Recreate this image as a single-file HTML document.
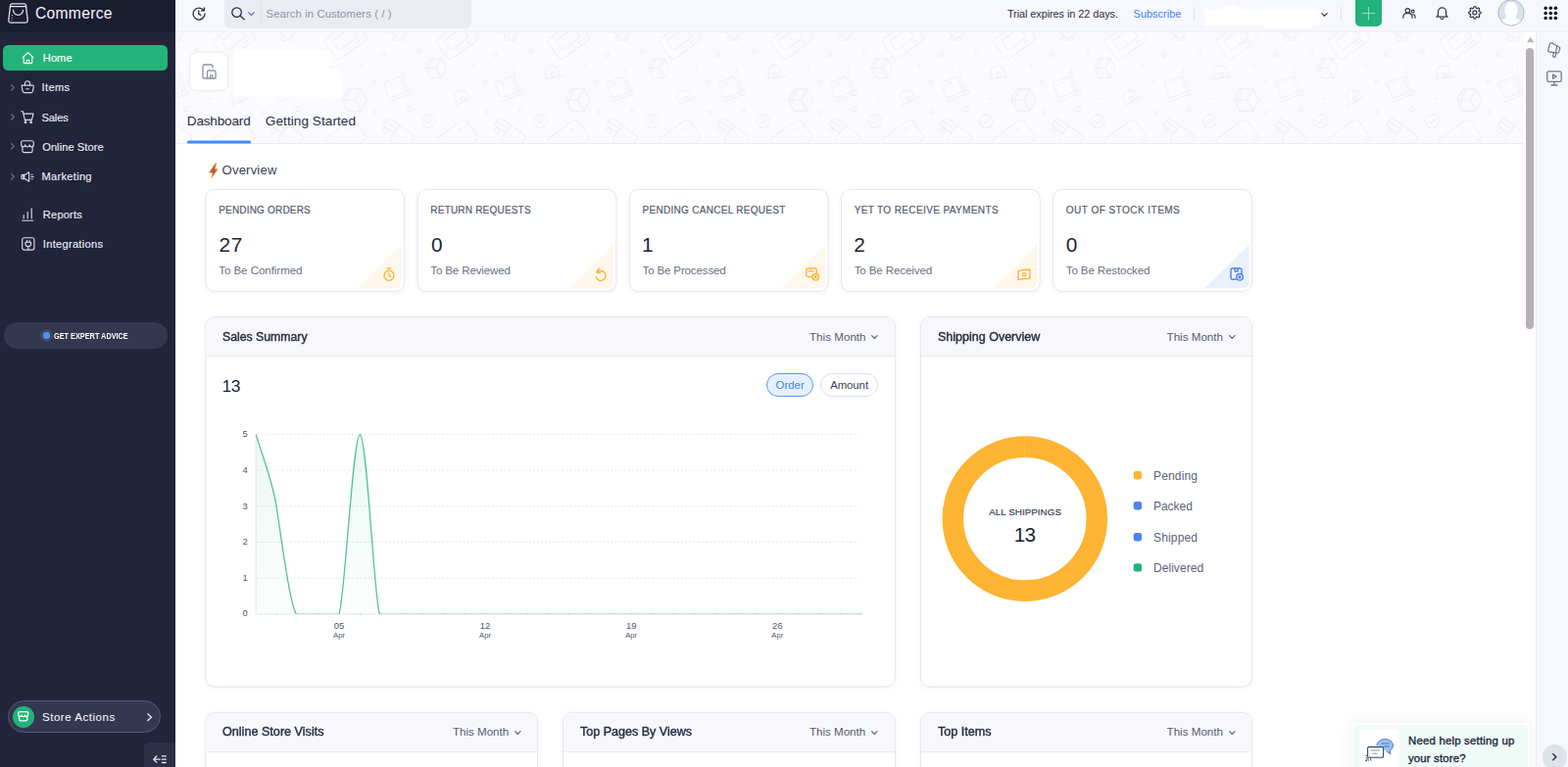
<!DOCTYPE html>
<html lang="en"><head><meta charset="utf-8"><title>Commerce - Dashboard</title>
<style>
html,body{margin:0;padding:0;}
body{width:1600px;height:783px;overflow:hidden;position:relative;background:#fff;font-family:"Liberation Sans", sans-serif;}
div,svg,span{position:absolute;box-sizing:border-box;}
.t{white-space:nowrap;line-height:1;}
svg{overflow:visible;}

</style></head><body>
<div style="left:179px;top:33px;width:1388px;height:114px;background:#fbfbff;border-bottom:1px solid #ebecf4;overflow:hidden;"><svg style="left:0;top:0" width="1389" height="114" viewBox="0 0 1389 114" fill="none" stroke="#f0f0fa" stroke-width="1.2" stroke-linecap="round" stroke-linejoin="round"><defs><pattern id="pt" width="227.5" height="140" patternUnits="userSpaceOnUse" x="153.5" y="-3"><g transform="translate(0,0)"><g transform="translate(20.3,10.5) rotate(-36)"><rect x="-19" y="-12.5" width="38" height="25" rx="4"/><rect x="-12" y="-7" width="23" height="12" rx="2"/><path d="M6 8.6h5"/></g><circle cx="71" cy="9" r="2.6"/><circle cx="78" cy="10" r="1.8"/><path d="M66 3l5 3M82 4l-4 4"/><circle cx="58.8" cy="25.6" r="2.2"/><circle cx="95.2" cy="22.1" r="2"/><circle cx="48.7" cy="53" r="2"/><circle cx="85.1" cy="81.5" r="2.3"/><circle cx="50.2" cy="84.4" r="2"/><path d="M33.5 35.2a3.6 3.6 0 0 1 4 5"/><path d="M107.4 71.6a1.8 1.8 0 0 1 3.4 0"/><g transform="translate(70.5,58.5)"><g transform="rotate(-21)"><rect x="-9.5" y="-8" width="18" height="17" rx="2.5"/><path d="M-4 -4.6h5"/><path d="M-11 12.4h22"/></g><path d="M8.6 -19.4c-2 3-1.6 5-.6 8l5.6 15"/><circle cx="14.6" cy="6.2" r="2.4"/></g><g transform="translate(112.2,39.9)"><path d="M-5.6 -10h11.2l5.4 9.6-5.4 10h-11.2l-5.4-10z"/><path d="M-11 -0.4h11.6l5-9.6M0.6 -0.4l5 10M-3 -10l-4.6 9.6v3.4"/></g><g transform="translate(29.4,72.3) scale(1.16)"><path d="M-5.6 -10h11.2l5.4 9.6-5.4 10h-11.2l-5.4-10z"/><path d="M-11 -0.4h11.6l5-9.6M0.6 -0.4l5 10M-3 -10l-4.6 9.6v3.4"/></g><circle cx="105.2" cy="93.7" r="6.8"/><path d="M102.4 94l2 2.2 3.8-4.6"/><g transform="translate(20,112) rotate(-36)"><rect x="-19" y="-12.5" width="38" height="25" rx="4"/><path d="M6 -6h5"/><circle cx="-19" cy="4" r="2"/><circle cx="-12" cy="10" r="2"/></g><g transform="translate(69.5,106) rotate(36)"><rect x="-14" y="-10" width="14" height="10" rx="2"/><rect x="0" y="-10" width="20" height="19" rx="3"/><path d="M-14 -5h14M-14 0h14"/><circle cx="-9" cy="3" r="2.4"/></g></g><g transform="translate(113.75,0)"><g transform="translate(20.3,10.5) rotate(-36)"><rect x="-19" y="-12.5" width="38" height="25" rx="4"/><rect x="-12" y="-7" width="23" height="12" rx="2"/><path d="M6 8.6h5"/></g><circle cx="71" cy="9" r="2.6"/><circle cx="78" cy="10" r="1.8"/><path d="M66 3l5 3M82 4l-4 4"/><circle cx="58.8" cy="25.6" r="2.2"/><circle cx="95.2" cy="22.1" r="2"/><circle cx="48.7" cy="53" r="2"/><circle cx="85.1" cy="81.5" r="2.3"/><circle cx="50.2" cy="84.4" r="2"/><path d="M33.5 35.2a3.6 3.6 0 0 1 4 5"/><path d="M107.4 71.6a1.8 1.8 0 0 1 3.4 0"/><g transform="translate(70.5,58.5)"><g transform="rotate(-21)"><rect x="-9.5" y="-8" width="18" height="17" rx="2.5"/><path d="M-4 -4.6h5"/><path d="M-11 12.4h22"/></g><path d="M8.6 -19.4c-2 3-1.6 5-.6 8l5.6 15"/><circle cx="14.6" cy="6.2" r="2.4"/></g><g transform="translate(117,43)"><g transform="rotate(-8)"><path d="M-7 6v-8.4l2.2-2.4 3.6-1.8 4.4 1.6 2.8 2.6.6 8.4"/><circle cx="0.4" cy="3.4" r="2.2"/><path d="M-11 6.4h22"/></g></g><g transform="translate(24.4,68)"><g transform="rotate(-27)"><path d="M-7 6v-8.4l2.2-2.4 3.6-1.8 4.4 1.6 2.8 2.6.6 8.4"/><circle cx="0.4" cy="3.4" r="2.2"/><path d="M-11 6.4h22"/></g></g><circle cx="105.2" cy="93.7" r="6.8"/><path d="M102.4 94l2 2.2 3.8-4.6"/><g transform="translate(20,112) rotate(-36)"><rect x="-19" y="-12.5" width="38" height="25" rx="4"/><path d="M6 -6h5"/><circle cx="-19" cy="4" r="2"/><circle cx="-12" cy="10" r="2"/></g><g transform="translate(69.5,106) rotate(36)"><rect x="-14" y="-10" width="14" height="10" rx="2"/><rect x="0" y="-10" width="20" height="19" rx="3"/><path d="M-14 -5h14M-14 0h14"/><circle cx="-9" cy="3" r="2.4"/></g></g><g transform="translate(-113.75,0)"><g transform="translate(20.3,10.5) rotate(-36)"><rect x="-19" y="-12.5" width="38" height="25" rx="4"/><rect x="-12" y="-7" width="23" height="12" rx="2"/><path d="M6 8.6h5"/></g><circle cx="71" cy="9" r="2.6"/><circle cx="78" cy="10" r="1.8"/><path d="M66 3l5 3M82 4l-4 4"/><circle cx="58.8" cy="25.6" r="2.2"/><circle cx="95.2" cy="22.1" r="2"/><circle cx="48.7" cy="53" r="2"/><circle cx="85.1" cy="81.5" r="2.3"/><circle cx="50.2" cy="84.4" r="2"/><path d="M33.5 35.2a3.6 3.6 0 0 1 4 5"/><path d="M107.4 71.6a1.8 1.8 0 0 1 3.4 0"/><g transform="translate(70.5,58.5)"><g transform="rotate(-21)"><rect x="-9.5" y="-8" width="18" height="17" rx="2.5"/><path d="M-4 -4.6h5"/><path d="M-11 12.4h22"/></g><path d="M8.6 -19.4c-2 3-1.6 5-.6 8l5.6 15"/><circle cx="14.6" cy="6.2" r="2.4"/></g><g transform="translate(117,43)"><g transform="rotate(-8)"><path d="M-7 6v-8.4l2.2-2.4 3.6-1.8 4.4 1.6 2.8 2.6.6 8.4"/><circle cx="0.4" cy="3.4" r="2.2"/><path d="M-11 6.4h22"/></g></g><g transform="translate(24.4,68)"><g transform="rotate(-27)"><path d="M-7 6v-8.4l2.2-2.4 3.6-1.8 4.4 1.6 2.8 2.6.6 8.4"/><circle cx="0.4" cy="3.4" r="2.2"/><path d="M-11 6.4h22"/></g></g><circle cx="105.2" cy="93.7" r="6.8"/><path d="M102.4 94l2 2.2 3.8-4.6"/><g transform="translate(20,112) rotate(-36)"><rect x="-19" y="-12.5" width="38" height="25" rx="4"/><path d="M6 -6h5"/><circle cx="-19" cy="4" r="2"/><circle cx="-12" cy="10" r="2"/></g><g transform="translate(69.5,106) rotate(36)"><rect x="-14" y="-10" width="14" height="10" rx="2"/><rect x="0" y="-10" width="20" height="19" rx="3"/><path d="M-14 -5h14M-14 0h14"/><circle cx="-9" cy="3" r="2.4"/></g></g><g transform="translate(227.5,0)"><g transform="translate(20.3,10.5) rotate(-36)"><rect x="-19" y="-12.5" width="38" height="25" rx="4"/><rect x="-12" y="-7" width="23" height="12" rx="2"/><path d="M6 8.6h5"/></g><circle cx="71" cy="9" r="2.6"/><circle cx="78" cy="10" r="1.8"/><path d="M66 3l5 3M82 4l-4 4"/><circle cx="58.8" cy="25.6" r="2.2"/><circle cx="95.2" cy="22.1" r="2"/><circle cx="48.7" cy="53" r="2"/><circle cx="85.1" cy="81.5" r="2.3"/><circle cx="50.2" cy="84.4" r="2"/><path d="M33.5 35.2a3.6 3.6 0 0 1 4 5"/><path d="M107.4 71.6a1.8 1.8 0 0 1 3.4 0"/><g transform="translate(70.5,58.5)"><g transform="rotate(-21)"><rect x="-9.5" y="-8" width="18" height="17" rx="2.5"/><path d="M-4 -4.6h5"/><path d="M-11 12.4h22"/></g><path d="M8.6 -19.4c-2 3-1.6 5-.6 8l5.6 15"/><circle cx="14.6" cy="6.2" r="2.4"/></g><g transform="translate(112.2,39.9)"><path d="M-5.6 -10h11.2l5.4 9.6-5.4 10h-11.2l-5.4-10z"/><path d="M-11 -0.4h11.6l5-9.6M0.6 -0.4l5 10M-3 -10l-4.6 9.6v3.4"/></g><g transform="translate(29.4,72.3) scale(1.16)"><path d="M-5.6 -10h11.2l5.4 9.6-5.4 10h-11.2l-5.4-10z"/><path d="M-11 -0.4h11.6l5-9.6M0.6 -0.4l5 10M-3 -10l-4.6 9.6v3.4"/></g><circle cx="105.2" cy="93.7" r="6.8"/><path d="M102.4 94l2 2.2 3.8-4.6"/><g transform="translate(20,112) rotate(-36)"><rect x="-19" y="-12.5" width="38" height="25" rx="4"/><path d="M6 -6h5"/><circle cx="-19" cy="4" r="2"/><circle cx="-12" cy="10" r="2"/></g><g transform="translate(69.5,106) rotate(36)"><rect x="-14" y="-10" width="14" height="10" rx="2"/><rect x="0" y="-10" width="20" height="19" rx="3"/><path d="M-14 -5h14M-14 0h14"/><circle cx="-9" cy="3" r="2.4"/></g></g></pattern></defs><rect x="0" y="0" width="1389" height="114" fill="url(#pt)" stroke="none"/></svg></div>
<div style="left:1555px;top:33px;width:12px;height:750px;background:#fff;"></div>
<div style="left:193px;top:53px;width:40px;height:40px;background:#fff;border:1px solid #eeeef5;border-radius:8px;box-shadow:0 0 3px rgba(60,60,110,.05);"></div>
<svg style="left:205.5px;top:65px" width="15" height="16" viewBox="0 0 15 16" fill="none" stroke="#8d92a8" stroke-width="1.3" stroke-linecap="round" stroke-linejoin="round" ><path d="M11 4V2.6A1.6 1.6 0 0 0 9.4 1H2.6A1.6 1.6 0 0 0 1 2.6v10.8A1.6 1.6 0 0 0 2.6 15H5"/><path d="M5.5 15V8.6A1.6 1.6 0 0 1 7.1 7h5.3A1.6 1.6 0 0 1 14 8.6V15H5.5z"/><path d="M8.6 15v-2.2a1.2 1.2 0 0 1 2.4 0V15"/></svg>
<div style="left:238px;top:51px;width:98px;height:48px;background:#fff;border-radius:4px;filter:blur(1.2px);"></div>
<div style="left:300px;top:70px;width:48px;height:31px;background:#fff;border-radius:4px;filter:blur(1.2px);"></div>
<span class="t" style="left:190.80px;top:117.49px;font-size:13.6px;color:#2b2e44;letter-spacing:-0.200px;">Dashboard</span>
<span class="t" style="left:270.80px;top:117.49px;font-size:13.6px;color:#2b2e44;letter-spacing:0.057px;">Getting Started</span>
<svg style="left:0;top:0" width="1600" height="783"><path d="M191 146.5v-1.4a1.5 1.5 0 0 1 1.5-1.5h62a1.5 1.5 0 0 1 1.5 1.5v1.4z" fill="#408dfb"/></svg>
<svg style="left:0;top:0" width="1600" height="200"><path d="M220.1 166.2L213.3 176.1l3.6.3-1.1 5.500 6.500-9.300-2.900-.2 1.300-6.200z" fill="#a5623f" stroke="#f3b24a" stroke-width="0.7" stroke-linejoin="round"/></svg>
<span class="t" style="left:226.60px;top:167.31px;font-size:13.1px;color:#3a3f55;letter-spacing:0.171px;">Overview</span>
<svg style="left:0;top:0;filter:drop-shadow(0 1px 2px rgba(60,60,110,.07))" width="1600" height="783" viewBox="0 0 1600 783"><rect x="209.9" y="193.4" width="202.7" height="104" rx="9.5" fill="#fff" stroke="#e6e7f1"/><path d="M409.9 249.9V287.9a6 6 0 0 1-6 6H364.9Z" fill="#fff7eb"/><rect x="426.1" y="193.4" width="202.7" height="104" rx="9.5" fill="#fff" stroke="#e6e7f1"/><path d="M626.1 249.9V287.9a6 6 0 0 1-6 6H581.1Z" fill="#fff7eb"/><rect x="642.3" y="193.4" width="202.7" height="104" rx="9.5" fill="#fff" stroke="#e6e7f1"/><path d="M842.3 249.9V287.9a6 6 0 0 1-6 6H797.3Z" fill="#fff7eb"/><rect x="858.5" y="193.4" width="202.7" height="104" rx="9.5" fill="#fff" stroke="#e6e7f1"/><path d="M1058.5 249.9V287.9a6 6 0 0 1-6 6H1013.5Z" fill="#fff7eb"/><rect x="1074.7" y="193.4" width="202.7" height="104" rx="9.5" fill="#fff" stroke="#e6e7f1"/><path d="M1274.7 249.9V287.9a6 6 0 0 1-6 6H1229.7Z" fill="#eaf0fb"/><rect x="209.9" y="323.5" width="703.5" height="377.5" rx="9.5" fill="#fff" stroke="#e6e7f1"/><path d="M210.4 363.7V333.0a9.0 9.0 0 0 1 9.0 -9.0H903.9a9.0 9.0 0 0 1 9.0 9.0V363.7Z" fill="#f8f8fc"/><path d="M210.4 363.7H912.9" stroke="#e9eaf2" fill="none"/><rect x="939.5" y="323.5" width="338" height="377.5" rx="9.5" fill="#fff" stroke="#e6e7f1"/><path d="M940.0 363.7V333.0a9.0 9.0 0 0 1 9.0 -9.0H1268.0a9.0 9.0 0 0 1 9.0 9.0V363.7Z" fill="#f8f8fc"/><path d="M940.0 363.7H1277.0" stroke="#e9eaf2" fill="none"/><rect x="210" y="727.4" width="338.5" height="80" rx="9.5" fill="#fff" stroke="#e6e7f1"/><path d="M210.5 767.6V736.9a9.0 9.0 0 0 1 9.0 -9.0H539.0a9.0 9.0 0 0 1 9.0 9.0V767.6Z" fill="#f8f8fc"/><path d="M210.5 767.6H548.0" stroke="#e9eaf2" fill="none"/><rect x="574.5" y="727.4" width="339" height="80" rx="9.5" fill="#fff" stroke="#e6e7f1"/><path d="M575.0 767.6V736.9a9.0 9.0 0 0 1 9.0 -9.0H904.0a9.0 9.0 0 0 1 9.0 9.0V767.6Z" fill="#f8f8fc"/><path d="M575.0 767.6H913.0" stroke="#e9eaf2" fill="none"/><rect x="939.5" y="727.4" width="338" height="80" rx="9.5" fill="#fff" stroke="#e6e7f1"/><path d="M940.0 767.6V736.9a9.0 9.0 0 0 1 9.0 -9.0H1268.0a9.0 9.0 0 0 1 9.0 9.0V767.6Z" fill="#f8f8fc"/><path d="M940.0 767.6H1277.0" stroke="#e9eaf2" fill="none"/></svg>
<span class="t lab" style="left:223.20px;top:209.53px;font-size:10px;color:#565b70;letter-spacing:0.185px;-webkit-text-stroke:0.2px #565b70;">PENDING ORDERS</span>
<span class="t" style="left:223.40px;top:239.79px;font-size:20.8px;color:#1d1f35;letter-spacing:0.800px;">27</span>
<span class="t" style="left:223.20px;top:270.18px;font-size:11.6px;color:#6b7086;letter-spacing:-0.071px;">To Be Confirmed</span>
<svg style="left:391.2px;top:273px" width="12" height="14" viewBox="0 0 12 14" fill="none" stroke="#fbb33c" stroke-width="1.4" stroke-linecap="round" stroke-linejoin="round" ><circle cx="6" cy="8.2" r="5"/><path d="M4.3 1h3.4M6 5.6v2.8l1.6 1.2"/></svg>
<span class="t lab" style="left:439.35px;top:209.53px;font-size:10px;color:#565b70;letter-spacing:0.200px;-webkit-text-stroke:0.2px #565b70;">RETURN REQUESTS</span>
<span class="t" style="left:439.95px;top:239.79px;font-size:20.8px;color:#1d1f35;">0</span>
<span class="t" style="left:439.35px;top:270.18px;font-size:11.6px;color:#6b7086;letter-spacing:-0.169px;">To Be Reviewed</span>
<svg style="left:607.4px;top:273px" width="12" height="14" viewBox="0 0 12 14" fill="none" stroke="#fbb33c" stroke-width="1.4" stroke-linecap="round" stroke-linejoin="round" ><path d="M2.2 5.2a5 5 0 1 1-1 4.6"/><path d="M4.6 1L1.6 4.6l4 1.2"/></svg>
<span class="t lab" style="left:655.50px;top:209.53px;font-size:10px;color:#565b70;letter-spacing:0.295px;-webkit-text-stroke:0.2px #565b70;">PENDING CANCEL REQUEST</span>
<span class="t" style="left:655.10px;top:239.79px;font-size:20.8px;color:#1d1f35;">1</span>
<span class="t" style="left:655.50px;top:270.18px;font-size:11.6px;color:#6b7086;letter-spacing:-0.171px;">To Be Processed</span>
<svg style="left:822.2px;top:273.2px" width="14" height="13.6" viewBox="0 0 14 13.6" fill="none" stroke="#fbb33c" stroke-width="1.4" stroke-linecap="round" stroke-linejoin="round" ><rect x="0.8" y="1" width="10.4" height="8.6" rx="1.6"/><path d="M3 4.2c1.6-1 3.2-1 4.8 0"/><circle cx="10.2" cy="9.8" r="3.3" fill="#fff7eb"/><path d="M9.2 8.8l2 2M11.2 8.8l-2 2"/></svg>
<span class="t lab" style="left:871.65px;top:209.53px;font-size:10px;color:#565b70;letter-spacing:0.382px;-webkit-text-stroke:0.2px #565b70;">YET TO RECEIVE PAYMENTS</span>
<span class="t" style="left:871.25px;top:239.79px;font-size:20.8px;color:#1d1f35;">2</span>
<span class="t" style="left:871.65px;top:270.18px;font-size:11.6px;color:#6b7086;letter-spacing:-0.123px;">To Be Received</span>
<svg style="left:1038.4px;top:274px" width="14" height="12.4" viewBox="0 0 14 12.4" fill="none" stroke="#fbb33c" stroke-width="1.4" stroke-linecap="round" stroke-linejoin="round" ><path d="M1 2.6c4-1 8-1.4 12-1.4v9c-4 0-8 .4-12 1.4z"/><circle cx="7" cy="6.2" r="1.6"/></svg>
<span class="t lab" style="left:1087.80px;top:209.53px;font-size:10px;color:#565b70;letter-spacing:0.471px;-webkit-text-stroke:0.2px #565b70;">OUT OF STOCK ITEMS</span>
<span class="t" style="left:1087.80px;top:239.79px;font-size:20.8px;color:#1d1f35;">0</span>
<span class="t" style="left:1087.80px;top:270.18px;font-size:11.6px;color:#6b7086;letter-spacing:-0.143px;">To Be Restocked</span>
<svg style="left:1254.6px;top:273.2px" width="14" height="13.6" viewBox="0 0 14 13.6" fill="none" stroke="#4a84e4" stroke-width="1.4" stroke-linecap="round" stroke-linejoin="round" ><path d="M6 12.2H2.4A1.4 1.4 0 0 1 1 10.8V2.4A1.4 1.4 0 0 1 2.4 1h8.2A1.4 1.4 0 0 1 12 2.4V6"/><path d="M5 1v3h3V1"/><circle cx="10" cy="9.8" r="3.3"/><circle cx="10" cy="9.8" r="0.9"/></svg>
<span class="t" style="left:227.10px;top:336.71px;font-size:13.1px;color:#2b2e44;transform:scaleX(0.9366);transform-origin:0 0;-webkit-text-stroke:0.45px #2b2e44;">Sales Summary</span>
<span class="t" style="left:826.00px;top:338.18px;font-size:11.6px;color:#565b70;letter-spacing:0.022px;">This Month</span>
<svg style="left:889.2px;top:342.4px" width="6.6" height="4.2" viewBox="0 0 6.6 4.2" fill="none" stroke="#6b7086" stroke-width="1.3" stroke-linecap="round" stroke-linejoin="round" ><path d="M0.6 0.6l2.7 2.9 2.7-2.9"/></svg>
<svg style="left:0;top:0" width="1600" height="783" viewBox="0 0 1600 783">
<defs><linearGradient id="ga" x1="0" y1="0" x2="0" y2="1"><stop offset="0" stop-color="#23b37a" stop-opacity=".09"/><stop offset="1" stop-color="#23b37a" stop-opacity="0.015"/></linearGradient></defs>
<g stroke="#dcdfea" stroke-width="1" stroke-dasharray="1.4 2.8" fill="none"><line x1="262.7" x2="876.5" y1="590.0" y2="590.0"/><line x1="262.7" x2="876.5" y1="553.4" y2="553.4"/><line x1="262.7" x2="876.5" y1="516.8" y2="516.8"/><line x1="262.7" x2="876.5" y1="480.2" y2="480.2"/><line x1="262.7" x2="876.5" y1="443.6" y2="443.6"/></g>
<path d="M261.2 443.6 C267.2 463.7 278.1 491.2 282.1 516.8 C288.1 557.1 295.8 615.6 302.2 626.6 L261.2 626.6 Z M346.0 626.6 C351.4 615.6 360.2 443.6 367.3 443.6 C374.3 443.6 382.0 615.6 387.4 626.6 Z" fill="url(#ga)"/>
<line x1="261.2" x2="261.2" y1="443.6" y2="626.6" stroke="#e3e5f1" stroke-width="1"/>
<line x1="261.2" x2="879" y1="626.9" y2="626.9" stroke="#e1e6f0" stroke-width="1"/>
<path d="M302.2 626.6 L346.0 626.6 M387.4 626.6 L878.9 626.6" fill="none" stroke="#b9e2d2" stroke-width="1"/>
<g stroke="#8fd4b7" stroke-width=".8"><line x1="282.5" x2="282.5" y1="625.7" y2="627.2"/><line x1="303.8" x2="303.8" y1="625.7" y2="627.2"/><line x1="325.1" x2="325.1" y1="625.7" y2="627.2"/><line x1="346.4" x2="346.4" y1="625.7" y2="627.2"/><line x1="367.7" x2="367.7" y1="625.7" y2="627.2"/><line x1="389.0" x2="389.0" y1="625.7" y2="627.2"/><line x1="410.3" x2="410.3" y1="625.7" y2="627.2"/><line x1="431.6" x2="431.6" y1="625.7" y2="627.2"/><line x1="452.9" x2="452.9" y1="625.7" y2="627.2"/><line x1="474.2" x2="474.2" y1="625.7" y2="627.2"/><line x1="495.5" x2="495.5" y1="625.7" y2="627.2"/><line x1="516.8" x2="516.8" y1="625.7" y2="627.2"/><line x1="538.1" x2="538.1" y1="625.7" y2="627.2"/><line x1="559.4" x2="559.4" y1="625.7" y2="627.2"/><line x1="580.7" x2="580.7" y1="625.7" y2="627.2"/><line x1="602.0" x2="602.0" y1="625.7" y2="627.2"/><line x1="623.3" x2="623.3" y1="625.7" y2="627.2"/><line x1="644.6" x2="644.6" y1="625.7" y2="627.2"/><line x1="665.9" x2="665.9" y1="625.7" y2="627.2"/><line x1="687.2" x2="687.2" y1="625.7" y2="627.2"/><line x1="708.5" x2="708.5" y1="625.7" y2="627.2"/><line x1="729.8" x2="729.8" y1="625.7" y2="627.2"/><line x1="751.1" x2="751.1" y1="625.7" y2="627.2"/><line x1="772.4" x2="772.4" y1="625.7" y2="627.2"/><line x1="793.7" x2="793.7" y1="625.7" y2="627.2"/><line x1="815.0" x2="815.0" y1="625.7" y2="627.2"/><line x1="836.3" x2="836.3" y1="625.7" y2="627.2"/><line x1="857.6" x2="857.6" y1="625.7" y2="627.2"/><line x1="878.9" x2="878.9" y1="625.7" y2="627.2"/></g>
<path d="M261.2 443.6 C267.2 463.7 278.1 491.2 282.1 516.8 C288.1 557.1 295.8 615.6 302.2 626.6 M346.0 626.6 C351.4 615.6 360.2 443.6 367.3 443.6 C374.3 443.6 382.0 615.6 387.4 626.6" fill="none" stroke="#56c295" stroke-width="1.3" stroke-linejoin="round" stroke-linecap="butt"/>
<g font-family='"Liberation Sans", sans-serif' font-size="9.3" fill="#51566c"><text x="250" y="629.3" text-anchor="middle">0</text><text x="250" y="592.7" text-anchor="middle">1</text><text x="250" y="556.1" text-anchor="middle">2</text><text x="250" y="519.5" text-anchor="middle">3</text><text x="250" y="482.9" text-anchor="middle">4</text><text x="250" y="446.3" text-anchor="middle">5</text><text x="346.0" y="641.6" text-anchor="middle" font-size="9.5">05</text><text x="346.0" y="651.2" text-anchor="middle" font-size="7.7">Apr</text><text x="495.1" y="641.6" text-anchor="middle" font-size="9.5">12</text><text x="495.1" y="651.2" text-anchor="middle" font-size="7.7">Apr</text><text x="644.2" y="641.6" text-anchor="middle" font-size="9.5">19</text><text x="644.2" y="651.2" text-anchor="middle" font-size="7.7">Apr</text><text x="793.3" y="641.6" text-anchor="middle" font-size="9.5">26</text><text x="793.3" y="651.2" text-anchor="middle" font-size="7.7">Apr</text></g>
</svg>
<span class="t" style="left:226.40px;top:386.27px;font-size:17.4px;color:#1d1f35;letter-spacing:-0.200px;">13</span>
<div style="left:782px;top:381px;width:48px;height:24px;background:#e6f0fc;border:1px solid #5b9af3;border-radius:12px;"></div>
<span class="t" style="left:791.60px;top:387.95px;font-size:11.4px;color:#3f83e6;">Order</span>
<div style="left:837px;top:381px;width:59px;height:24px;background:#fff;border:1px solid #dcdfec;border-radius:12px;"></div>
<span class="t" style="left:847.20px;top:387.95px;font-size:11.4px;color:#3a3f55;letter-spacing:-0.080px;">Amount</span>
<span class="t" style="left:956.70px;top:336.71px;font-size:13.1px;color:#2b2e44;transform:scaleX(0.9555);transform-origin:0 0;-webkit-text-stroke:0.45px #2b2e44;">Shipping Overview</span>
<span class="t" style="left:1190.60px;top:338.18px;font-size:11.6px;color:#565b70;">This Month</span>
<svg style="left:1253.6px;top:342.4px" width="6.6" height="4.2" viewBox="0 0 6.6 4.2" fill="none" stroke="#6b7086" stroke-width="1.3" stroke-linecap="round" stroke-linejoin="round" ><path d="M0.6 0.6l2.7 2.9 2.7-2.9"/></svg>
<svg style="left:0;top:0" width="1600" height="783" viewBox="0 0 1600 783"><circle cx="1045.8" cy="529.6" r="73.5" fill="none" stroke="#fdb432" stroke-width="21.6"/><line x1="1045.8" x2="1045.8" y1="445.4" y2="467" stroke="#fdc666" stroke-width=".6"/></svg>
<span class="t" style="left:1009.20px;top:517.70px;font-size:9.8px;color:#3a3f55;letter-spacing:0.050px;-webkit-text-stroke:0.2px #3a3f55;">ALL SHIPPINGS</span>
<span class="t" style="left:1034.80px;top:535.96px;font-size:20.6px;color:#1d1f35;letter-spacing:-0.800px;">13</span>
<svg style="left:0;top:0" width="1600" height="783"><rect x="1156.7" y="481.1" width="8.4" height="8.4" rx="2.4" fill="#fdb432"/></svg>
<span class="t" style="left:1177.00px;top:480.44px;font-size:12px;color:#5d6277;letter-spacing:0.167px;">Pending</span>
<svg style="left:0;top:0" width="1600" height="783"><rect x="1156.7" y="512.1" width="8.4" height="8.4" rx="2.4" fill="#4b86ee"/></svg>
<span class="t" style="left:1177.00px;top:511.44px;font-size:12px;color:#5d6277;letter-spacing:-0.040px;">Packed</span>
<svg style="left:0;top:0" width="1600" height="783"><rect x="1156.7" y="544.1" width="8.4" height="8.4" rx="2.4" fill="#4b86ee"/></svg>
<span class="t" style="left:1177.00px;top:542.64px;font-size:12px;color:#5d6277;letter-spacing:0.167px;">Shipped</span>
<svg style="left:0;top:0" width="1600" height="783"><rect x="1156.7" y="575.2" width="8.4" height="8.4" rx="2.4" fill="#23b37a"/></svg>
<span class="t" style="left:1177.00px;top:573.64px;font-size:12px;color:#5d6277;letter-spacing:0.050px;">Delivered</span>
<span class="t" style="left:227.20px;top:739.81px;font-size:13.1px;color:#2b2e44;transform:scaleX(0.9630);transform-origin:0 0;-webkit-text-stroke:0.45px #2b2e44;">Online Store Visits</span>
<span class="t" style="left:462.00px;top:741.28px;font-size:11.6px;color:#565b70;letter-spacing:-0.022px;">This Month</span>
<svg style="left:524.8px;top:745.5px" width="6.6" height="4.2" viewBox="0 0 6.6 4.2" fill="none" stroke="#6b7086" stroke-width="1.3" stroke-linecap="round" stroke-linejoin="round" ><path d="M0.6 0.6l2.7 2.9 2.7-2.9"/></svg>
<span class="t" style="left:591.70px;top:739.81px;font-size:13.1px;color:#2b2e44;transform:scaleX(0.9571);transform-origin:0 0;-webkit-text-stroke:0.45px #2b2e44;">Top Pages By Views</span>
<span class="t" style="left:826.00px;top:741.28px;font-size:11.6px;color:#565b70;letter-spacing:-0.022px;">This Month</span>
<svg style="left:889.4px;top:745.5px" width="6.6" height="4.2" viewBox="0 0 6.6 4.2" fill="none" stroke="#6b7086" stroke-width="1.3" stroke-linecap="round" stroke-linejoin="round" ><path d="M0.6 0.6l2.7 2.9 2.7-2.9"/></svg>
<span class="t" style="left:956.70px;top:739.81px;font-size:13.1px;color:#2b2e44;transform:scaleX(0.9632);transform-origin:0 0;-webkit-text-stroke:0.45px #2b2e44;">Top Items</span>
<span class="t" style="left:1190.60px;top:741.28px;font-size:11.6px;color:#565b70;">This Month</span>
<svg style="left:1253.6px;top:745.5px" width="6.6" height="4.2" viewBox="0 0 6.6 4.2" fill="none" stroke="#6b7086" stroke-width="1.3" stroke-linecap="round" stroke-linejoin="round" ><path d="M0.6 0.6l2.7 2.9 2.7-2.9"/></svg>
<div style="left:1380.2px;top:738px;width:181px;height:60px;background:#fff;border-radius:6px;box-shadow:0 0 16px rgba(60,60,110,.09);"></div>
<div style="left:1382.2px;top:739.8px;width:177px;height:60px;background:#effbf6;border-radius:5px;"></div>
<div style="left:1386.7px;top:744.3px;width:41.5px;height:50px;background:#fff;border-radius:5px;"></div>
<svg style="left:1393px;top:753px" width="29" height="25" viewBox="0 0 29 25" fill="none" stroke="none" stroke-width="1" stroke-linecap="round" stroke-linejoin="round" ><path d="M12 8c0-3.600 3.600-6.400 8.200-6.400S28.400 4.400 28.400 8c0 2.200-1.300 4.100-3.300 5.200l.9 3.600-3.800-2.500" fill="#9cc4f2" stroke="#4a78b8" stroke-width="1"/><path d="M17 6h7.500M19.500 9h5" stroke="#4a78b8" stroke-width="1"/><path d="M1 20.600a2.600 2.600 0 0 1 2.600 2.600M1 18.200a5 5 0 0 1 5 5" stroke="#3c4660" stroke-width="1"/><rect x="2.600" y="9.600" width="16" height="10.600" rx="1" fill="#fff" stroke="#3c4660" stroke-width="1.100"/><path d="M6 13h9M8 16.200h4" stroke="#8a90a6" stroke-width="1"/><circle cx="1.200" cy="23.300" r="1" fill="#3c4660" stroke="none"/></svg>
<span class="t" style="left:1437.00px;top:750.85px;font-size:11.4px;color:#21243b;letter-spacing:0.200px;-webkit-text-stroke:0.35px #21243b;">Need help setting up</span>
<span class="t" style="left:1437.00px;top:768.65px;font-size:11.4px;color:#21243b;letter-spacing:0.160px;-webkit-text-stroke:0.35px #21243b;">your store?</span>
<svg style="left:1557.6px;top:38.4px" width="7.4" height="5.2" viewBox="0 0 7.4 5.2" fill="#b7b0b8" stroke="none" stroke-width="1.5" stroke-linecap="round" stroke-linejoin="round" ><path d="M3.7 0L7.4 5.2H0z"/></svg>
<div style="left:1557.4px;top:48.8px;width:7.6px;height:287.6px;background:#b7b0b8;border-radius:4px;"></div>
<div style="left:1567px;top:33px;width:33px;height:750px;background:#f7f7fe;border-left:1px solid #ececf5;"></div>
<svg style="left:1579px;top:43px" width="14" height="16" viewBox="0 0 14 16" fill="none" stroke="#73788f" stroke-width="1.2" stroke-linecap="round" stroke-linejoin="round" ><path d="M4.7 0.9L12.3 5.3a1 1 0 0 1 .45 1.1L11.6 10.3a1 1 0 0 1-1.1.75L1.5 9.9a1 1 0 0 1-.85-1.2L2.5 1.7a1.5 1.5 0 0 1 2.2-.8z"/><path d="M9.6 4.2L8.4 10.8"/><path d="M6.3 10.9l-.6 2.9a1.3 1.3 0 0 0 2.6.5l.6-3"/></svg>
<svg style="left:1578px;top:72px" width="16" height="16" viewBox="0 0 16 16" fill="none" stroke="#73788f" stroke-width="1.3" stroke-linecap="round" stroke-linejoin="round" ><rect x="0.8" y="0.8" width="14.4" height="10.6" rx="1.6"/><path d="M6.6 4l3.4 2.1-3.4 2.1z"/><path d="M8 11.4v3.2M5 15h6"/></svg>
<div style="left:1573.6px;top:760.2px;width:25.6px;height:25.6px;background:#dde3eb;border-radius:50%;"></div>
<svg style="left:1584.4px;top:769.2px" width="4.6" height="7.6" viewBox="0 0 4.6 7.6" fill="none" stroke="#2b2e44" stroke-width="1.5" stroke-linecap="round" stroke-linejoin="round" ><path d="M0.8 0.8l3 3-3 3"/></svg>
<div style="left:179px;top:0px;width:1421px;height:33px;background:#f7f7fe;border-bottom:1px solid #f0f0f8;"></div>
<svg style="left:196px;top:7px" width="14" height="14" viewBox="0 0 14 14" fill="none" stroke="#2b2e44" stroke-width="1.3" stroke-linecap="round" stroke-linejoin="round" ><path d="M11.9 3.6A6 6 0 1 0 13 7"/><path d="M12.4 0.8v3h-3"/><path d="M6.8 4v3.4l2 1"/></svg>
<div style="left:229.4px;top:-6px;width:251.8px;height:34.6px;background:#ebecf3;border-radius:6px;"></div>
<svg style="left:236px;top:7px" width="14" height="13.5" viewBox="0 0 14 13.5" fill="none" stroke="#2b2e44" stroke-width="1.3" stroke-linecap="round" stroke-linejoin="round" ><circle cx="5.6" cy="5.6" r="4.8"/><path d="M9.2 9.2l4 3.6"/></svg>
<svg style="left:252.6px;top:11.6px" width="7" height="4.2" viewBox="0 0 7 4.2" fill="none" stroke="#3f83e6" stroke-width="1.2" stroke-linecap="round" stroke-linejoin="round" ><path d="M0.6 0.6l2.9 2.9 2.9-2.9"/></svg>
<div style="left:266px;top:4px;width:1px;height:18.4px;background:#dcdfea;"></div>
<span class="t" style="left:271.60px;top:8.72px;font-size:11.2px;color:#8d92a6;letter-spacing:0.150px;">Search in Customers ( / )</span>
<span class="t" style="left:1027.90px;top:8.97px;font-size:10.9px;color:#2b2e44;letter-spacing:-0.062px;">Trial expires in 22 days.</span>
<span class="t" style="left:1156.60px;top:8.97px;font-size:10.9px;color:#3f83e6;letter-spacing:0.050px;">Subscribe</span>
<div style="left:1218px;top:7px;width:1px;height:14.6px;background:#e2e4ee;"></div>
<div style="left:1228.5px;top:8.5px;width:118.5px;height:18px;background:#fff;border-radius:2px;filter:blur(.8px);"></div>
<div style="left:1247px;top:4.5px;width:17px;height:6px;background:#fff;border-radius:2px;filter:blur(.8px);"></div>
<div style="left:1290px;top:24px;width:50px;height:5px;background:#fff;border-radius:2px;filter:blur(.8px);"></div>
<svg style="left:1347.8px;top:13px" width="7" height="4.2" viewBox="0 0 7 4.4" fill="none" stroke="#3a3c4f" stroke-width="1.3" stroke-linecap="round" stroke-linejoin="round" ><path d="M0.7 0.7l2.8 2.8 2.8-2.8"/></svg>
<div style="left:1368.2px;top:5.6px;width:1px;height:15px;background:#e4e6ef;"></div>
<div style="left:1383px;top:-6px;width:27px;height:32.8px;background:#23b37a;border-radius:5px;"></div>
<svg style="left:1390px;top:7px" width="13" height="13" viewBox="0 0 13 13" fill="none" stroke="#c2eedb" stroke-width="0.7" stroke-linecap="round" stroke-linejoin="round" ><path d="M6.5 0.4v12.4M0.3 6.5h12.4"/></svg>
<svg style="left:1431px;top:7.8px" width="13.8" height="10.9" viewBox="0 0 14.4 11.6" fill="none" stroke="#34374b" stroke-width="1.25" stroke-linecap="round" stroke-linejoin="round" ><circle cx="5.6" cy="3" r="2.4"/><path d="M0.7 11v-1.4a3.6 3.6 0 0 1 3.6-3.6h2.6a3.6 3.6 0 0 1 3.6 3.6V11"/><circle cx="11.2" cy="3.8" r="1.5"/><path d="M11.4 7.2a2.6 2.6 0 0 1 2.3 2.6V11"/></svg>
<svg style="left:1465px;top:6.2px" width="13" height="14" viewBox="0 0 13 14" fill="none" stroke="#34374b" stroke-width="1.2" stroke-linecap="round" stroke-linejoin="round" ><path d="M2.4 9.4V6a4.1 4.1 0 0 1 8.2 0v3.4l1.4 1.8H1z"/><path d="M5 12.6a1.6 1.6 0 0 0 3 0"/></svg>
<svg style="left:1498.2px;top:6.2px" width="13.8" height="13.8" viewBox="0 0 24 24" fill="none" stroke="#34374b" stroke-width="2.1" stroke-linecap="round" stroke-linejoin="round" ><path d="M12 15.5a3.5 3.5 0 1 0 0-7 3.5 3.5 0 0 0 0 7z"/><path d="M19.4 15a1.65 1.65 0 0 0 .33 1.82l.06.06a2 2 0 1 1-2.83 2.83l-.06-.06a1.65 1.65 0 0 0-1.82-.33 1.65 1.65 0 0 0-1 1.51V21a2 2 0 0 1-4 0v-.09A1.65 1.65 0 0 0 9 19.4a1.65 1.65 0 0 0-1.82.33l-.06.06a2 2 0 1 1-2.83-2.83l.06-.06a1.65 1.65 0 0 0 .33-1.82 1.65 1.65 0 0 0-1.51-1H3a2 2 0 0 1 0-4h.09A1.65 1.65 0 0 0 4.6 9a1.65 1.65 0 0 0-.33-1.82l-.06-.06a2 2 0 1 1 2.83-2.83l.06.06a1.65 1.65 0 0 0 1.82.33H9a1.65 1.65 0 0 0 1-1.51V3a2 2 0 0 1 4 0v.09a1.65 1.65 0 0 0 1 1.51 1.65 1.65 0 0 0 1.82-.33l.06-.06a2 2 0 1 1 2.83 2.83l-.06.06a1.65 1.65 0 0 0-.33 1.82V9a1.65 1.65 0 0 0 1.51 1H21a2 2 0 0 1 0 4h-.09a1.65 1.65 0 0 0-1.51 1z"/></svg>
<svg style="left:0;top:0" width="1600" height="40" viewBox="0 0 1600 40"><defs><clipPath id="av"><circle cx="1542" cy="13" r="13.1"/></clipPath></defs><circle cx="1542" cy="13" r="13.2" fill="#d7e3ea"/><g clip-path="url(#av)" fill="#fff"><ellipse cx="1542" cy="10.4" rx="6.7" ry="8.3"/><rect x="1537" y="13" width="10" height="8"/><path d="M1529 28c0-6 4-8.6 8.6-9.6h8.8c4.600 1 8.600 3.600 8.600 9.600z"/></g><circle cx="1542" cy="13" r="13.2" fill="none" stroke="#b5b1b9" stroke-width="0.9"/></svg>
<svg style="left:0;top:0" width="1600" height="40" fill="#0f1026"><circle cx="1577.2" cy="8.3" r="1.75"/><circle cx="1577.2" cy="13.4" r="1.75"/><circle cx="1577.2" cy="18.5" r="1.75"/><circle cx="1582.3" cy="8.3" r="1.75"/><circle cx="1582.3" cy="13.4" r="1.75"/><circle cx="1582.3" cy="18.5" r="1.75"/><circle cx="1587.4" cy="8.3" r="1.75"/><circle cx="1587.4" cy="13.4" r="1.75"/><circle cx="1587.4" cy="18.5" r="1.75"/></svg>
<div style="left:0px;top:0px;width:179px;height:783px;background:#21243b;"></div>
<div style="left:0px;top:0px;width:179px;height:33px;background:#1a1c30;"></div>
<svg style="left:8px;top:3px" width="21" height="21" viewBox="0 0 21 21" fill="none" stroke="#dfe0ea" stroke-width="1.3" stroke-linecap="round" stroke-linejoin="round" ><path d="M4.4 0.9h12.2a1.9 1.9 0 0 1 1.9 1.7l1.7 15a2.2 2.2 0 0 1-2.2 2.5H3a2.2 2.2 0 0 1-2.2-2.5l1.7-15A1.9 1.9 0 0 1 4.4.9z"/><path d="M2.5 3.7h16"/><path d="M5.6 7.4a4.9 4.9 0 0 0 9.8 0"/><path d="M4.3 12.6v.1M4.2 15v.1M4.1 17.2v.1" stroke-width="1.1"/></svg>
<span class="t" style="left:36.00px;top:5.59px;font-size:15.6px;color:#f6f6fa;letter-spacing:0.314px;">Commerce</span>
<div style="left:3px;top:46px;width:168px;height:26px;background:#23b37a;border-radius:5.5px;"></div>
<svg style="left:22px;top:53px" width="13" height="12.4" viewBox="0 0 13 12.4" fill="none" stroke="#f4fbf8" stroke-width="1.15" stroke-linecap="round" stroke-linejoin="round" ><path d="M1 5.6L6.5 0.8 12 5.6"/><path d="M2.2 4.8v5.6a1.3 1.3 0 0 0 1.3 1.3h6a1.3 1.3 0 0 0 1.3-1.3V4.8"/><path d="M5.2 11.6V9.4a1.3 1.3 0 0 1 2.6 0v2.2"/></svg>
<span class="t" style="left:43.80px;top:53.60px;font-size:11.1px;color:#fff;letter-spacing:0.067px;-webkit-text-stroke:0.15px #fff;">Home</span>
<svg style="left:10.8px;top:85.85px" width="4" height="6.8" viewBox="0 0 4.4 7.4" fill="none" stroke="#7b7e95" stroke-width="1.15" stroke-linecap="round" stroke-linejoin="round" ><path d="M0.7 0.7l2.9 3-2.9 3"/></svg>
<svg style="left:21px;top:82.4px" width="14" height="13.4" viewBox="0 0 14 13.4" fill="none" stroke="#d9dbe7" stroke-width="1.15" stroke-linecap="round" stroke-linejoin="round" ><path d="M1.6 5.2h10.8a1 1 0 0 1 1 1.2l-.9 4.6a2 2 0 0 1-2 1.6H4.1a2 2 0 0 1-2-1.6L1.2 6.4a1 1 0 0 1 .4-1.2z"/><path d="M4.4 5V3.4a2.6 2.6 0 0 1 5.2 0V5"/><path d="M5.8 8.8h2.4"/></svg>
<span class="t" style="left:42.60px;top:83.85px;font-size:11.1px;color:#e9ebf5;letter-spacing:0.350px;-webkit-text-stroke:0.15px #e9ebf5;">Items</span>
<svg style="left:10.8px;top:116.1px" width="4" height="6.8" viewBox="0 0 4.4 7.4" fill="none" stroke="#7b7e95" stroke-width="1.15" stroke-linecap="round" stroke-linejoin="round" ><path d="M0.7 0.7l2.9 3-2.9 3"/></svg>
<svg style="left:21px;top:112.8px" width="14" height="13.4" viewBox="0 0 14 13.4" fill="none" stroke="#d9dbe7" stroke-width="1.15" stroke-linecap="round" stroke-linejoin="round" ><path d="M0.7 0.8h1.7l1.9 8.6h7.1l1.7-6.2H3.2"/><circle cx="5" cy="11.8" r="0.9"/><circle cx="10.6" cy="11.8" r="0.9"/></svg>
<span class="t" style="left:42.60px;top:115.10px;font-size:11.1px;color:#e9ebf5;letter-spacing:-0.150px;-webkit-text-stroke:0.15px #e9ebf5;">Sales</span>
<svg style="left:10.8px;top:146.29999999999998px" width="4" height="6.8" viewBox="0 0 4.4 7.4" fill="none" stroke="#7b7e95" stroke-width="1.15" stroke-linecap="round" stroke-linejoin="round" ><path d="M0.7 0.7l2.9 3-2.9 3"/></svg>
<svg style="left:21px;top:143px" width="14" height="13.4" viewBox="0 0 14 13.4" fill="none" stroke="#d9dbe7" stroke-width="1.15" stroke-linecap="round" stroke-linejoin="round" ><path d="M2.4 0.8h9.2a1.7 1.7 0 0 1 1.7 1.7v2.3a2.05 2.05 0 0 1-4.1 0 2.2 2.2 0 0 1-4.4 0 2.05 2.05 0 0 1-4.1 0V2.5A1.7 1.7 0 0 1 2.4.8z"/><path d="M1.9 7.4v3.5a1.7 1.7 0 0 0 1.7 1.7h6.800a1.700 1.700 0 0 0 1.700-1.700V7.400"/></svg>
<span class="t" style="left:43.20px;top:145.30px;font-size:11.1px;color:#e9ebf5;letter-spacing:0.064px;-webkit-text-stroke:0.15px #e9ebf5;">Online Store</span>
<svg style="left:10.8px;top:176.6px" width="4" height="6.8" viewBox="0 0 4.4 7.4" fill="none" stroke="#7b7e95" stroke-width="1.15" stroke-linecap="round" stroke-linejoin="round" ><path d="M0.7 0.7l2.9 3-2.9 3"/></svg>
<svg style="left:21px;top:174.6px" width="14" height="11" viewBox="0 0 14 11" fill="none" stroke="#d9dbe7" stroke-width="1.15" stroke-linecap="round" stroke-linejoin="round" ><path d="M8.6 0.8v9.4L4.4 7.6H2A1.2 1.2 0 0 1 .8 6.4V4.6A1.2 1.2 0 0 1 2 3.4h2.4z"/><circle cx="3.2" cy="5.5" r="0.9"/><path d="M10.8 3.2h1.4M10.8 5.5h2.4M10.8 7.8h1.4" stroke-width="1.1"/></svg>
<span class="t" style="left:42.60px;top:174.60px;font-size:11.1px;color:#e9ebf5;letter-spacing:0.275px;-webkit-text-stroke:0.15px #e9ebf5;">Marketing</span>
<svg style="left:22.2px;top:212px" width="12.4" height="14" viewBox="0 0 12.4 14" fill="none" stroke="#d9dbe7" stroke-width="1.15" stroke-linecap="round" stroke-linejoin="round" ><path d="M2.2 11V7.6M6.2 11V4.4M10.2 11V0.8"/><path d="M0.7 13.3h11"/></svg>
<span class="t" style="left:43.80px;top:214.35px;font-size:11.1px;color:#e9ebf5;letter-spacing:0.200px;-webkit-text-stroke:0.15px #e9ebf5;">Reports</span>
<svg style="left:21.8px;top:242px" width="13.6" height="13.8" viewBox="0 0 13.6 13.8" fill="none" stroke="#d9dbe7" stroke-width="1.15" stroke-linecap="round" stroke-linejoin="round" ><rect x="0.7" y="0.7" width="12.2" height="12.4" rx="2"/><path d="M4 5.3h5.600v1.500a2.800 2.800 0 0 1-5.600 0z"/><path d="M5.500 3.300v2M8.100 3.300v2M6.800 9.600v3.400"/></svg>
<span class="t" style="left:43.80px;top:243.50px;font-size:11.1px;color:#e9ebf5;letter-spacing:0.291px;-webkit-text-stroke:0.15px #e9ebf5;">Integrations</span>
<div style="left:4px;top:329.4px;width:167px;height:26.6px;background:#343750;border-radius:14px;"></div>
<div style="left:41px;top:336.2px;width:13px;height:13px;background:#444860;border-radius:50%;"></div>
<div style="left:44.2px;top:339.4px;width:6.6px;height:6.6px;background:#4d90f7;border-radius:50%;"></div>
<span class="t" style="left:54.60px;top:338.79px;font-size:8.4px;color:#fff;font-weight:700;transform:scaleX(0.8736);transform-origin:0 0;">GET EXPERT ADVICE</span>
<div style="left:7.8px;top:715px;width:156.6px;height:33px;background:#343750;border:1px solid #54576f;border-radius:17px;"></div>
<div style="left:12.8px;top:720.6px;width:22px;height:22px;background:#23b37a;border-radius:50%;"></div>
<svg style="left:18.2px;top:726.4px" width="11.4" height="10.6" viewBox="0 0 14 13.4" fill="none" stroke="#fff" stroke-width="1.5" stroke-linecap="round" stroke-linejoin="round" ><path d="M2.4 0.8h9.2a1.7 1.7 0 0 1 1.7 1.7v2.3a2.05 2.05 0 0 1-4.1 0 2.2 2.2 0 0 1-4.4 0 2.05 2.05 0 0 1-4.1 0V2.5A1.7 1.7 0 0 1 2.4.8z"/><path d="M1.9 7.4v3.5a1.7 1.7 0 0 0 1.7 1.7h6.800a1.700 1.700 0 0 0 1.700-1.700V7.400"/></svg>
<span class="t" style="left:43.00px;top:727.27px;font-size:11.5px;color:#fff;letter-spacing:0.533px;">Store Actions</span>
<svg style="left:150px;top:727.6px" width="5.2" height="8.4" viewBox="0 0 5.2 8.4" fill="none" stroke="#e4e6f2" stroke-width="1.4" stroke-linecap="round" stroke-linejoin="round" ><path d="M0.8 0.8l3.6 3.4-3.6 3.4"/></svg>
<div style="left:147px;top:758px;width:32px;height:30px;background:#2c2f47;border-radius:5px 0 0 0;"></div>
<svg style="left:156.2px;top:771.2px" width="13.8" height="8.4" viewBox="0 0 13.8 8.4" fill="none" stroke="#e4e6f2" stroke-width="1.3" stroke-linecap="round" stroke-linejoin="round" ><path d="M0.8 4.2h6.4M3.8 1L0.8 4.2l3 3.2"/><path d="M9.4 0.9h3.8M9.4 4.2h3.8M9.4 7.5h3.8"/></svg>
</body></html>
